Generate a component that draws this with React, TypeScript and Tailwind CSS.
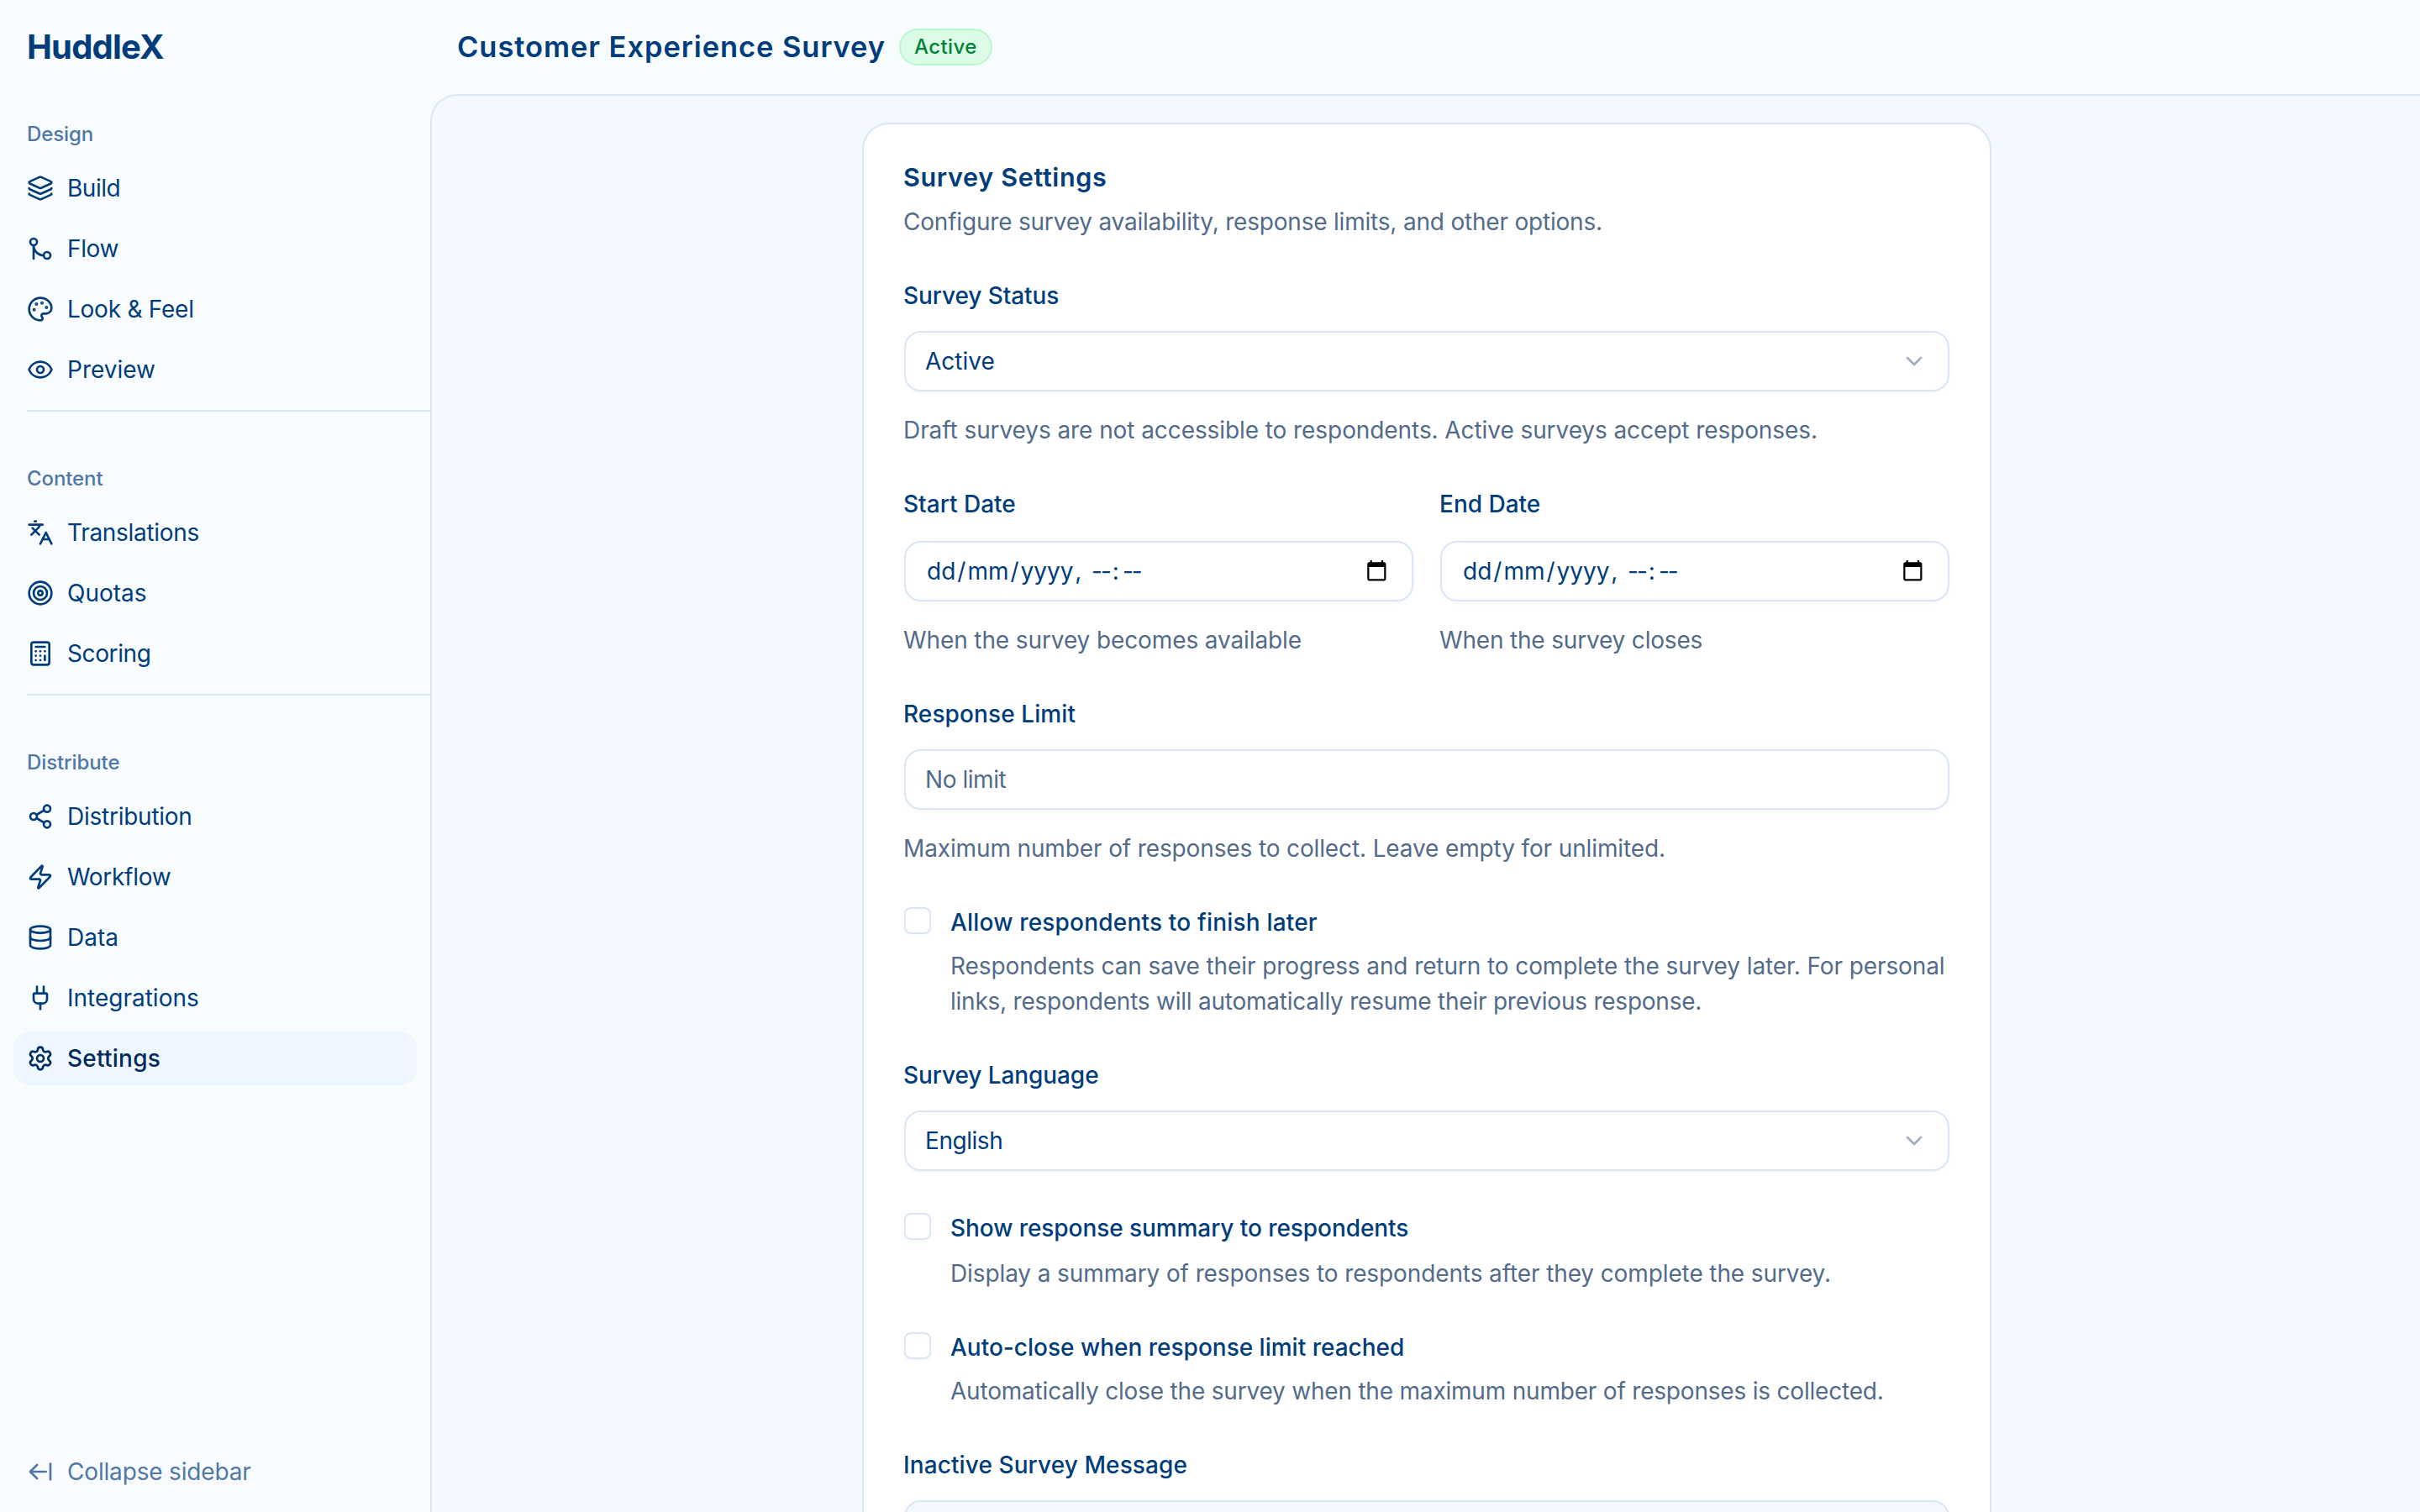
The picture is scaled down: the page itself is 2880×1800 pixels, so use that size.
import {
  ArrowLeftFromLine,
  Calculator,
  ChevronDown,
  Database,
  Eye,
  GitMerge,
  Languages,
  Layers,
  Palette,
  Plug,
  Settings,
  Share2,
  Target,
  Zap,
  type LucideIcon,
} from "lucide-react";
import type { ReactNode } from "react";

type NavItem = { label: string; icon: LucideIcon; active?: boolean; tracking?: string };

const navGroups: { title: string; items: NavItem[] }[] = [
  {
    title: "Design",
    items: [
      { label: "Build", icon: Layers, tracking: "tracking-[-0.5px]" },
      { label: "Flow", icon: GitMerge, tracking: "tracking-[-0.4px]" },
      { label: "Look & Feel", icon: Palette, tracking: "tracking-[-0.25px]" },
      { label: "Preview", icon: Eye },
    ],
  },
  {
    title: "Content",
    items: [
      { label: "Translations", icon: Languages, tracking: "tracking-[-0.3px]" },
      { label: "Quotas", icon: Target },
      { label: "Scoring", icon: Calculator, tracking: "tracking-[-0.4px]" },
    ],
  },
  {
    title: "Distribute",
    items: [
      { label: "Distribution", icon: Share2, tracking: "tracking-[-0.25px]" },
      { label: "Workflow", icon: Zap, tracking: "tracking-[-0.3px]" },
      { label: "Data", icon: Database },
      { label: "Integrations", icon: Plug },
      { label: "Settings", icon: Settings, active: true, tracking: "tracking-[0.25px]" },
    ],
  },
];

function Sidebar() {
  return (
    <aside className="flex w-[512px] shrink-0 flex-col">
      <div className="flex h-28 items-center px-8 text-[40px] font-bold tracking-[-0.8px]">
        HuddleX
      </div>
      <nav className="flex flex-1 flex-col">
        {navGroups.map((group, i) => (
          <div key={group.title}>
            {i > 0 && <div className="mb-8 ml-8 h-0.5 bg-[#dae6f6]" />}
            <div className="p-4">
              <div className="flex h-16 items-center px-4 text-2xl font-medium tracking-[-0.1px] text-[#4f78a5]">
                {group.title}
              </div>
              <ul className="flex flex-col gap-2">
                {group.items.map(({ label, icon: Icon, active, tracking = "" }) => (
                  <li
                    key={label}
                    className={`flex h-16 items-center gap-4 rounded-[20px] px-4 ${
                      active ? "bg-[#eef6ff] font-medium text-[#002b5c]" : ""
                    }`}
                  >
                    <Icon size={32} />
                    <span className={tracking}>{label}</span>
                  </li>
                ))}
              </ul>
            </div>
          </div>
        ))}
      </nav>
      <div className="p-4">
        <button className="flex h-16 items-center gap-4 px-4 tracking-[-0.17px] text-[#4f78a5]">
          <ArrowLeftFromLine size={32} />
          Collapse sidebar
        </button>
      </div>
    </aside>
  );
}

function Label({ children, tracking = "" }: { children: ReactNode; tracking?: string }) {
  return <div className={`-ml-px leading-[38px] font-medium ${tracking}`}>{children}</div>;
}

function Hint({
  children,
  tracking = "tracking-[-0.13px]",
}: {
  children: ReactNode;
  tracking?: string;
}) {
  return <p className={`-ml-px leading-[42px] text-[#536b8a] ${tracking}`}>{children}</p>;
}

function Control({ children }: { children: ReactNode }) {
  return (
    <div className="flex h-[72px] items-center justify-between rounded-[20px] border-2 border-[#dae6f6] bg-white pr-6 pl-[23px] shadow-[0_2px_4px_0_rgba(0,0,0,0.03)]">
      {children}
    </div>
  );
}

function SelectField({ label, value, hint }: { label: string; value: ReactNode; hint?: string }) {
  return (
    <div>
      <Label tracking="tracking-[-0.08px]">{label}</Label>
      <div className="mt-[23px]">
        <Control>
          <span>{value}</span>
          <ChevronDown size={32} className="text-[#a0aebf]" />
        </Control>
      </div>
      {hint && (
        <div className="mt-[25px]">
          <Hint tracking="tracking-[-0.08px]">{hint}</Hint>
        </div>
      )}
    </div>
  );
}

function DateField({ label, hint, tracking }: { label: string; hint: string; tracking: string }) {
  return (
    <div>
      <Label>{label}</Label>
      <div className="mt-[25px] mb-[25px]">
        <Control>
          <span className="flex tabular-nums">
            <span className="px-0.5">dd</span>/<span className="px-0.5">mm</span>/
            <span className="px-0.5">yyyy</span>,
            <span className="pl-3 tracking-[-2px] proportional-nums">--</span>
            <span className="pr-1 pl-[3px] proportional-nums">:</span>
            <span className="tracking-[-2px] proportional-nums">--</span>
          </span>
          <svg viewBox="0 0 24 24" className="mr-1 mb-0.5 h-[26.67px] w-[26.67px] fill-black">
            <path d="M20 3h-1V1h-2v2H7V1H5v2H4c-1.1 0-2 .9-2 2v16c0 1.1.9 2 2 2h16c1.1 0 2-.9 2-2V5c0-1.1-.9-2-2-2zm0 18H4V8h16v13z" />
          </svg>
        </Control>
      </div>
      <Hint tracking={tracking}>{hint}</Hint>
    </div>
  );
}

function CheckField({
  label,
  hint,
  gap = "mt-3",
  labelTracking,
  hintTracking,
}: {
  label: string;
  hint: ReactNode;
  gap?: string;
  labelTracking?: string;
  hintTracking?: string;
}) {
  return (
    <div className="flex gap-6">
      <div className="mt-px h-8 w-8 shrink-0 rounded-lg border-2 border-[#dae6f6] bg-white shadow-[0_2px_4px_0_rgba(0,0,0,0.03)]" />
      <div>
        <Label tracking={labelTracking}>{label}</Label>
        <div className={gap}>
          <Hint tracking={hintTracking}>{hint}</Hint>
        </div>
      </div>
    </div>
  );
}

function SurveySettings() {
  return (
    <section className="mt-8 h-[1900px] w-[1344px] shrink-0 rounded-[32px] border-2 border-[#dae6f6] bg-white px-12 pt-12">
      <h2 className="-ml-px text-[30.5px] leading-[30px] font-semibold tracking-[0.67px]">
        Survey Settings
      </h2>
      <div className="mt-[17px] mb-12">
        <Hint tracking="tracking-[-0.2px]">
          Configure survey availability, response limits, and other options.
        </Hint>
      </div>
      <div className="flex flex-col gap-12">
        <SelectField
          label="Survey Status"
          value="Active"
          hint="Draft surveys are not accessible to respondents. Active surveys accept responses."
        />
        <div className="grid grid-cols-2 gap-8">
          <DateField
            label="Start Date"
            hint="When the survey becomes available"
            tracking="tracking-[-0.11px]"
          />
          <DateField
            label="End Date"
            hint="When the survey closes"
            tracking="tracking-[-0.18px]"
          />
        </div>
        <div>
          <Label tracking="tracking-[0.1px]">Response Limit</Label>
          <div className="mt-[23px] mb-[25px]">
            <Control>
              <span className="tracking-[-0.45px] text-[#536b8a]">No limit</span>
            </Control>
          </div>
          <Hint>Maximum number of responses to collect. Leave empty for unlimited.</Hint>
        </div>
        <CheckField
          label="Allow respondents to finish later"
          hint={
            <>
              Respondents can save their progress and return to complete the survey later. For
              personal{" "}
              <span className="tracking-[-0.23px]">
                links, respondents will automatically resume their previous response.
              </span>
            </>
          }
          labelTracking="tracking-[0.19px]"
          hintTracking="tracking-[-0.1px]"
        />
        <div className="mb-px">
          <SelectField
            label="Survey Language"
            value={<span className="tracking-[-0.45px]">English</span>}
          />
        </div>
        <CheckField
          label="Show response summary to respondents"
          hint="Display a summary of responses to respondents after they complete the survey."
          gap="mt-3.5"
          labelTracking="tracking-[-0.07px]"
          hintTracking="tracking-[-0.11px]"
        />
        <CheckField
          label="Auto-close when response limit reached"
          hint="Automatically close the survey when the maximum number of responses is collected."
          hintTracking="tracking-[-0.2px]"
        />
        <div>
          <Label tracking="tracking-[0.1px]">Inactive Survey Message</Label>
          <div className="mt-[23px] h-32 rounded-[20px] border-2 border-[#dae6f6] bg-[#f4f8ff]" />
        </div>
      </div>
    </section>
  );
}

export default function App() {
  return (
    <div className="flex h-[1800px] w-[2880px] overflow-hidden bg-[#f9fcff] font-['Inter',sans-serif] text-[28px] leading-10 text-[#003d7a]">
      <Sidebar />
      <div className="flex min-w-0 flex-1 flex-col">
        <header className="flex h-28 shrink-0 items-center gap-4 px-8">
          <h1 className="text-[34.5px] font-semibold tracking-[0.93px]">
            Customer Experience Survey
          </h1>
          <span className="rounded-full border-2 border-[#b9f8cf] bg-[#dcfce7] px-4 py-1 text-2xl leading-8 font-medium tracking-[0.4px] text-[#008236]">
            Active
          </span>
        </header>
        <main className="flex flex-1 flex-col items-center overflow-hidden rounded-tl-[32px] border-t-2 border-l-2 border-[#dae6f6] bg-[#f4f8ff] pl-0.5">
          <SurveySettings />
        </main>
      </div>
    </div>
  );
}
